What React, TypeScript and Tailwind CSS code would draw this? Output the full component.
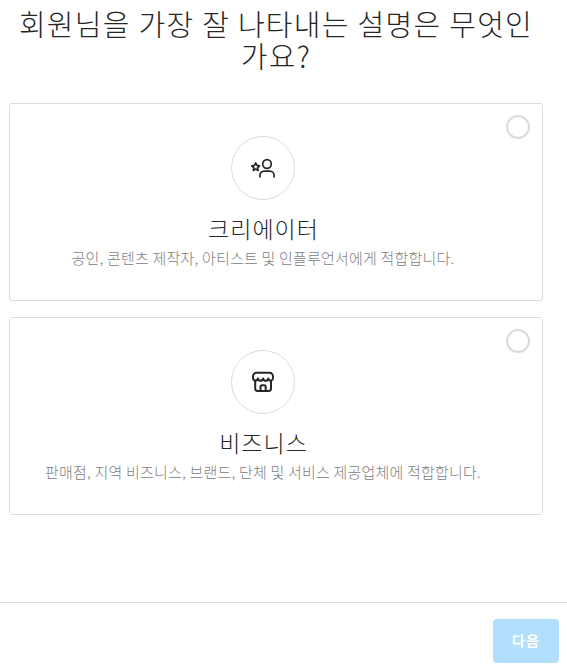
import React from 'react';

interface AccountOptionProps {
  title: string;
  description: string;
  icon: React.ReactNode;
}

function CreatorIcon() {
  return (
    <svg width="24" height="24" viewBox="0 0 24 24" fill="none" stroke="#262626" strokeWidth="1.7" strokeLinecap="round" strokeLinejoin="round">
      <circle cx="16" cy="8" r="4.3" />
      <path d="M8.9 20.8v-1.4a4.3 4.3 0 0 1 4.3-4.3h5.6a4.3 4.3 0 0 1 4.3 4.3v1.4" />
      <path d="M4.7 6.9l1.2 2.5 2.7.4-2 1.9.5 2.7-2.4-1.3-2.4 1.3.5-2.7-2-1.9 2.7-.4z" />
    </svg>
  );
}

function StoreIcon() {
  return (
    <svg width="24" height="24" viewBox="0 0 24 24" fill="none" stroke="#262626" strokeWidth="2" strokeLinecap="round" strokeLinejoin="round">
      <path d="M4.2 11v7.6A2.4 2.4 0 0 0 6.6 21h11a2.4 2.4 0 0 0 2.4-2.4V11" />
      <path d="M4.2 10.8C2.8 10.3 2 9.2 2 7.9V6.2c0-.6.2-1.2.6-1.7l.6-.8c.5-.6 1.2-1 2-1h13.6c.8 0 1.5.4 2 1l.6.8c.4.5.6 1.1.6 1.7v1.7c0 1.3-.8 2.4-2 2.9" />
      <path d="M4.2 10.7c1.300 0 2.300-.7 2.700-2.200.5 3 4.700 3 5.200 0 .5 3 4.700 3 5.200 0 .4 1.500 1.400 2.200 2.700 2.200" />
      <path d="M9.5 20.8v-3.900c0-.9.7-1.600 1.600-1.600h2c.9 0 1.600.7 1.600 1.600v3.900" />
    </svg>
  );
}

function AccountOption({ title, description, icon }: AccountOptionProps) {
  return (
    <div role="radio" aria-checked={false} className="relative flex h-[198px] flex-col items-center rounded-[3px] border border-[#dbdbdb] pt-8 pr-[41px] pl-[15px]">
      <span className="absolute top-[11px] right-3 h-6 w-6 rounded-full border-2 border-[#dbdbdb]" />
      <div className="flex h-16 w-16 items-center justify-center rounded-full border border-[#dbdbdb]">{icon}</div>
      <h2 className="mt-[15px] pl-px text-[23px] leading-[26px] font-light tracking-[1px] whitespace-nowrap text-[#262626]">{title}</h2>
      <p className="mt-2 text-[15px] leading-[18px] font-light tracking-[0.2px] whitespace-nowrap text-[#808080]">{description}</p>
    </div>
  );
}

export default function App() {
  return (
    <div className="flex h-[669px] w-[567px] flex-col overflow-hidden bg-white font-['Noto_Sans_CJK_KR',sans-serif]">
      <main className="flex-1 pr-6 pl-[9px]">
        <h1 className="pt-[7px] text-center text-[29px] leading-8 font-light tracking-[1.3px] text-[#262626]">
          회원님을 가장 잘 나타내는 설명은 무엇인가요?
        </h1>
        <div role="radiogroup" className="mt-8 flex flex-col gap-4">
          <AccountOption
            title="크리에이터"
            description="공인, 콘텐츠 제작자, 아티스트 및 인플루언서에게 적합합니다."
            icon={<CreatorIcon />}
          />
          <AccountOption
            title="비즈니스"
            description="판매점, 지역 비즈니스, 브랜드, 단체 및 서비스 제공업체에 적합합니다."
            icon={<StoreIcon />}
          />
        </div>
      </main>
      <footer className="flex h-[67px] justify-end border-t border-[#dbdbdb] pt-4 pr-2">
        <button type="button" disabled className="h-11 w-[66px] rounded bg-[#b2dffc] pb-0.5 text-sm font-bold tracking-[1px] text-white">
          다음
        </button>
      </footer>
    </div>
  );
}
